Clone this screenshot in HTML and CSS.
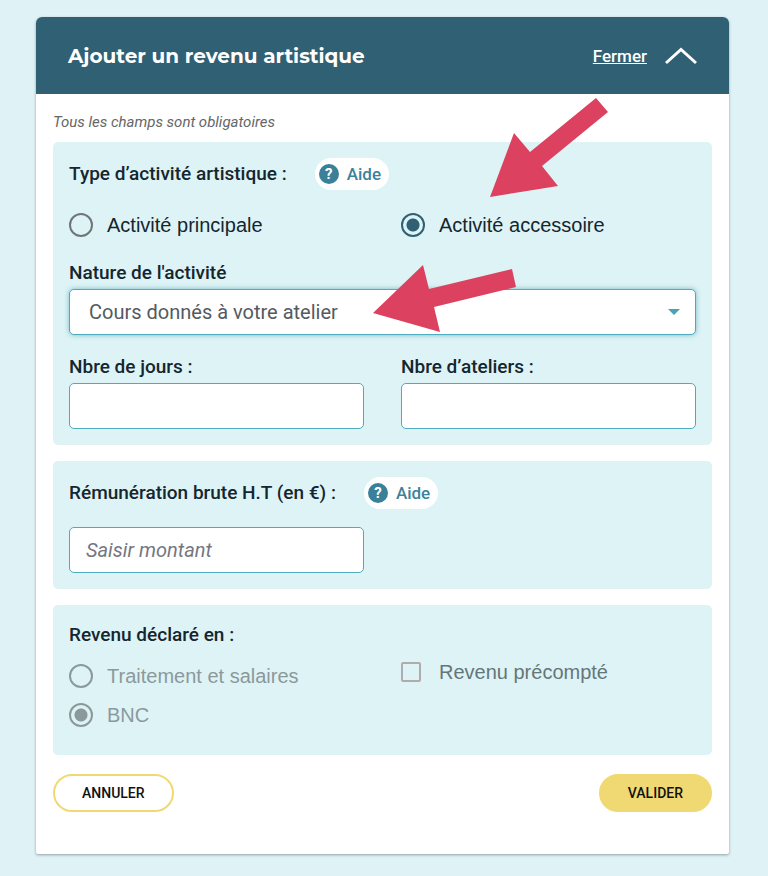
FILE: index.html
```
<!DOCTYPE html>
<html lang="fr">
<head>
    <meta charset="UTF-8">
    <meta name="viewport" content="width=device-width, initial-scale=1.0">
    <title>Ajouter un revenu artistique</title>
    <link rel="stylesheet" href="styles.css">
</head>
<body>

    <form class="card">
        <header class="card-header">
            <h1>Ajouter un revenu artistique</h1>
            <a href="#" class="close-link">
                <span>Fermer</span>
                <svg class="chevron" width="32" height="18" viewBox="0 0 32 18" aria-hidden="true">
                    <path d="M1 16 L16 2.5 L31 16" fill="none" stroke="#fff" stroke-width="3"/>
                </svg>
            </a>
        </header>

        <div class="card-body">
            <p class="note">Tous les champs sont obligatoires</p>

            <section class="panel">
                <div class="panel-title">
                    <h2>Type d’activité artistique :</h2>
                    <button type="button" class="help"><span class="help-icon">?</span>Aide</button>
                </div>

                <div class="columns activity">
                    <label class="choice"><input type="radio" name="activite">Activité principale</label>
                    <div class="marked">
                        <label class="choice"><input type="radio" name="activite" checked>Activité accessoire</label>
                        <svg class="arrow arrow-activity" width="118" height="99" viewBox="0 0 118 99" aria-hidden="true">
                            <path d="M0 99 L24 35 L40 54 L106 0 L118 14 L52 68 L68 88 Z" fill="#dc425f"/>
                        </svg>
                    </div>
                </div>

                <div class="field">
                    <label for="nature">Nature de l'activité</label>
                    <div class="select-box marked">
                        <select id="nature">
                            <option>Cours donnés à votre atelier</option>
                        </select>
                        <svg class="caret" width="12" height="6" viewBox="0 0 12 6" aria-hidden="true">
                            <path d="M0 0 H12 L6 6 Z" fill="#48a3b5"/>
                        </svg>
                        <svg class="arrow arrow-nature" width="143" height="67" viewBox="0 0 143 67" aria-hidden="true">
                            <path d="M0 48 L50 0 L56 24 L139 4 L143 22 L61 42 L67 67 Z" fill="#dc425f"/>
                        </svg>
                    </div>
                </div>

                <div class="columns">
                    <div class="field">
                        <label for="jours">Nbre de jours :</label>
                        <input type="text" id="jours">
                    </div>
                    <div class="field">
                        <label for="ateliers">Nbre d’ateliers :</label>
                        <input type="text" id="ateliers">
                    </div>
                </div>
            </section>

            <section class="panel">
                <div class="panel-title">
                    <h2><label for="montant">Rémunération brute H.T (en €) :</label></h2>
                    <button type="button" class="help"><span class="help-icon">?</span>Aide</button>
                </div>
                <div class="columns amount">
                    <input type="text" id="montant" placeholder="Saisir montant">
                </div>
            </section>

            <section class="panel panel-declared">
                <h2>Revenu déclaré en :</h2>
                <div class="columns declared">
                    <div class="choice-list">
                        <label class="choice disabled"><input type="radio" name="declaration" disabled>Traitement et salaires</label>
                        <label class="choice disabled"><input type="radio" name="declaration" checked disabled>BNC</label>
                    </div>
                    <label class="choice precompte"><input type="checkbox" disabled>Revenu précompté</label>
                </div>
            </section>

            <div class="actions">
                <button type="button" class="btn btn-outline">ANNULER</button>
                <button type="submit" class="btn btn-primary">VALIDER</button>
            </div>
        </div>
    </form>

</body>
</html>
```
FILE: styles.css
```
* {
    box-sizing: border-box;
    margin: 0;
    padding: 0;
}

body {
    font-family: Roboto, sans-serif;
    background-color: #dff3f6;
    color: #14262f;
    padding: 17px 39px 22px 36px;
}

.card {
    background-color: #fff;
    border-radius: 6px 6px 2px 2px;
    box-shadow: 0 1px 3px rgba(0, 0, 0, 0.35);
}

/* Header */
.card-header {
    display: flex;
    justify-content: space-between;
    align-items: center;
    min-height: 77px;
    padding: 0 32px;
    background-color: #306074;
    border-radius: 6px 6px 0 0;
    color: #fff;
}

.card-header h1 {
    font-family: Montserrat, Inter, sans-serif;
    font-size: 20px;
    font-weight: 700;
}

.close-link {
    display: flex;
    align-items: center;
    gap: 18px;
    color: #fff;
    font-size: 17px;
    font-weight: 500;
}

.card-body {
    padding: 16px 17px 42px;
}

.note {
    color: #666;
    font-size: 15px;
    font-style: italic;
    line-height: 24px;
    margin-bottom: 8px;
}

/* Panels */
.panel {
    background-color: #def3f5;
    border-radius: 5px;
    padding: 16px;
    margin-bottom: 16px;
}

.panel-title {
    display: flex;
    align-items: center;
    gap: 28px;
}

.panel h2,
.field label {
    font-size: 19px;
    font-weight: 500;
    line-height: 24px;
}

.help {
    display: flex;
    align-items: center;
    gap: 8px;
    height: 32px;
    padding: 0 8px 0 4px;
    border: none;
    border-radius: 16px;
    background-color: #fff;
    color: #3d8299;
    font-family: inherit;
    font-size: 17px;
    font-weight: 500;
    cursor: pointer;
}

.help-icon {
    width: 20px;
    height: 20px;
    border-radius: 50%;
    background-color: #3a8098;
    color: #fff;
    font-size: 15px;
    font-weight: 700;
    line-height: 20px;
    text-align: center;
}

.columns {
    display: grid;
    grid-template-columns: 1fr 1fr;
    column-gap: 37px;
}

.activity {
    margin: 23px 0 24px;
}

.amount {
    margin-top: 18px;
}

/* Radios and checkbox */
.choice {
    display: flex;
    align-items: center;
    gap: 14px;
    font-family: "Liberation Sans", Arial, sans-serif;
    font-size: 20px;
    line-height: 24px;
}

.choice input {
    appearance: none;
    flex: none;
    width: 24px;
    height: 24px;
    border: 2px solid #6e7679;
    border-radius: 50%;
}

.choice input:checked {
    border-color: #306074;
    background: radial-gradient(circle, #306074 6px, transparent 7px);
}

.choice.disabled {
    color: #8b999c;
}

.choice.disabled input {
    border-color: #8b999c;
}

.choice.disabled input:checked {
    background: radial-gradient(circle, #8b999c 6px, transparent 7px);
}

.choice input[type="checkbox"] {
    width: 20px;
    height: 20px;
    border-color: #b0abae;
    border-radius: 2px;
}

/* Fields */
.field label {
    display: block;
    margin-bottom: 4px;
}

input[type="text"],
select {
    display: block;
    width: 100%;
    height: 46px;
    padding: 0 16px;
    border: 1px solid #4fabbd;
    border-radius: 5px;
    background-color: #fff;
    color: #555a60;
    font-family: inherit;
    font-size: 20px;
}

select {
    appearance: none;
    padding: 0 40px 0 19px;
    box-shadow: 0 0 5px rgba(72, 163, 181, 0.7);
}

input::placeholder {
    color: #757681;
    font-style: italic;
}

.select-box {
    margin-bottom: 20px;
}

.caret {
    position: absolute;
    right: 16px;
    top: 20px;
    pointer-events: none;
}

/* Arrows laid over the form */
.marked {
    position: relative;
}

.arrow {
    position: absolute;
    z-index: 1;
    pointer-events: none;
}

.arrow-activity {
    left: 89px;
    bottom: 40px;
}

.arrow-nature {
    left: 304px;
    top: -24px;
}

/* Declared income */
.panel-declared {
    padding: 18px 16px 28px;
}

.declared {
    align-items: start;
    margin-top: 17px;
}

.choice-list {
    display: grid;
    gap: 15px;
}

.precompte {
    gap: 18px;
    margin-top: -4px;
    color: #657679;
}

/* Buttons */
.actions {
    display: flex;
    justify-content: space-between;
    margin-top: 19px;
}

.btn {
    height: 38px;
    padding: 0 27px;
    border: 2px solid #f0d973;
    border-radius: 19px;
    background-color: #fff;
    color: #111;
    font-family: inherit;
    font-size: 14px;
    font-weight: 500;
    cursor: pointer;
}

.btn-primary {
    background-color: #f0d973;
}
```
